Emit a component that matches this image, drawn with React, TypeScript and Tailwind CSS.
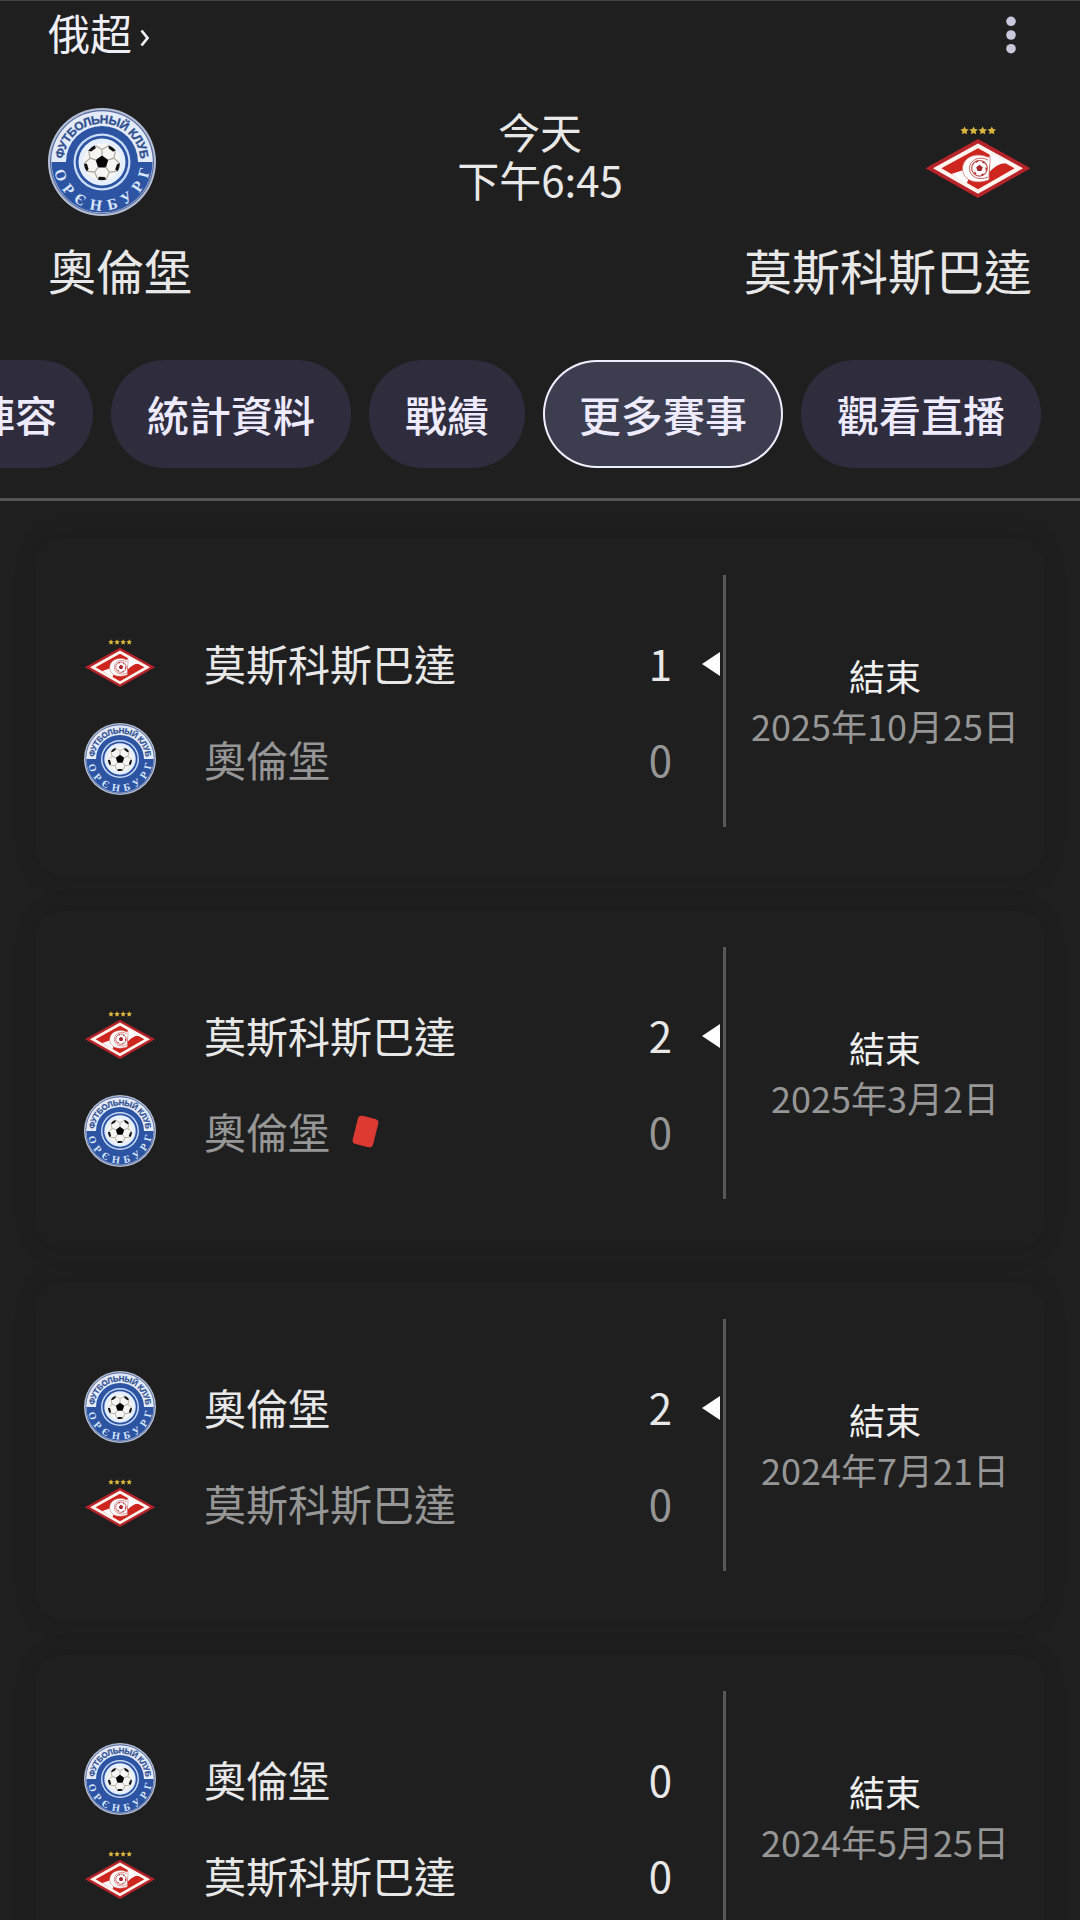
import React from "react";
import { clsx } from "clsx";

type TeamId = "orenburg" | "spartak";

interface Side {
  team: TeamId;
  score: number;
  redCard?: boolean;
}

interface Match {
  date: string;
  sides: [Side, Side];
}

const teamNames: Record<TeamId, string> = {
  orenburg: "奧倫堡",
  spartak: "莫斯科斯巴達",
};

const tabs = ["陣容", "統計資料", "戰績", "更多賽事", "觀看直播"];

const matches: Match[] = [
  {
    date: "2025年10月25日",
    sides: [
      { team: "spartak", score: 1 },
      { team: "orenburg", score: 0 },
    ],
  },
  {
    date: "2025年3月2日",
    sides: [
      { team: "spartak", score: 2 },
      { team: "orenburg", score: 0, redCard: true },
    ],
  },
  {
    date: "2024年7月21日",
    sides: [
      { team: "orenburg", score: 2 },
      { team: "spartak", score: 0 },
    ],
  },
  {
    date: "2024年5月25日",
    sides: [
      { team: "orenburg", score: 0 },
      { team: "spartak", score: 0 },
    ],
  },
];

function OrenburgLogo({ className, id }: { className?: string; id: string }) {
  return (
    <svg viewBox="0 0 108 108" className={className}>
      <defs>
        <path id={`${id}-top`} d="M15.5 54a38.5 38.5 0 0 1 77 0" />
        <path id={`${id}-bottom`} d="M5.5 54a48.5 48.5 0 0 0 97 0" />
      </defs>
      <circle cx="54" cy="54" r="54" fill="#b4bfd6" />
      <circle cx="54" cy="54" r="52" fill="#5a6c9c" />
      <circle cx="54" cy="54" r="50.8" fill="#e3eafa" />
      <path d="M3.5 54a50.5 50.5 0 0 0 101 0z" fill="#2c54a3" />
      <circle cx="54" cy="54" r="36" fill="#2c54a3" />
      <circle cx="54" cy="54" r="28.5" fill="#c9dcf8" />
      <circle cx="54" cy="54" r="26.3" fill="#2c54a3" />
      <circle cx="54" cy="54" r="23.5" fill="#e6effd" />
      <circle cx="54" cy="54" r="18.5" fill="#f7f5f1" />
      {/* Ball panels */}
      <path d="M54 47.5l6.3 4.6-2.4 7.4h-7.8l-2.4-7.4z" fill="#050505" />
      {[0, 72, 144, 216, 288].map((angle) => (
        <g key={angle} transform={`rotate(${angle} 54 54)`}>
          <path d="M54 48v-6.5M54 41.5l-6-3.5M54 41.5l6-3.5" stroke="#a9a49c" strokeWidth="1.1" fill="none" />
          <path d="M60.5 37.2q4.5 1.6 7.3 5l-2.6 1.6-4.5-3.4z" fill="#111" />
        </g>
      ))}
      <text fontFamily="Liberation Sans, sans-serif" fontWeight="700" fontSize="12" fill="#30508f" stroke="#30508f" strokeWidth="0.3">
        <textPath href={`#${id}-top`} startOffset="3" textLength="115">
          ФУТБОЛЬНЫЙ КЛУБ
        </textPath>
      </text>
      <text fontFamily="Liberation Serif, serif" fontWeight="700" fontSize="15.5" fill="#d9e6fb">
        <textPath href={`#${id}-bottom`} startOffset="9" textLength="136">
          ОРЄНБУРГ
        </textPath>
      </text>
    </svg>
  );
}

function SpartakLogo({ className }: { className?: string }) {
  return (
    <svg viewBox="0 0 108 108" className={className}>
      {[40.5, 49.6, 58.7, 67.8].map((x) => (
        <path
          key={x}
          transform={`translate(${x} 22.5)`}
          d="M0-4l1.3 2.4 2.9.5-2.1 2 .4 2.9L0 2.6l-2.5 1.2.4-2.9-2.1-2 2.9-.5z"
          fill="#d9b53c"
        />
      ))}
      <path d="M54 31l52.5 29.3L54 90 1.5 60.3z" fill="#b6242a" />
      <path d="M54 35.4l45 24.9-45 25.5-45-25.5z" fill="#fff4ee" />
      <path d="M54 40.2l36.6 20.1L54 81.2 17.4 60.3z" fill="#cf251f" />
      {/* Diagonal band */}
      <path d="M65 45l19 10.5c-7-1-12 2-18 8V48zM27.5 66l12-4c1.5 5 3.5 8 5 9.5l-2 4z" fill="#fff" />
      <path
        d="M66 54.500v-6.300l-2 1C51 43.500 38.500 50 38.500 60.800c0 11 12.500 16.500 26.500 11v-5.600z"
        fill="#fff"
        stroke="#c96f6c"
        strokeWidth="0.8"
      />
      <path d="M64 52c-8-4.500-18.500-.5-18.500 8.300s9.500 12.700 18.500 8.700" fill="none" stroke="#c9625f" strokeWidth="1" />
      <circle cx="55.5" cy="60.3" r="7.8" fill="#fff" stroke="#c04a4c" strokeWidth="1.2" />
      <path d="M55.500 56.800l3.300 2.400-1.300 3.800h-4l-1.300-3.800z" fill="#a7262b" />
      <path
        d="M52 54.200l2-1M58.500 53.600l2 1.600M62.200 59.500v3M59.500 66l-2 1M52 66l-1.500-1.800"
        stroke="#b2282c"
        strokeWidth="1.4"
        fill="none"
      />
    </svg>
  );
}

function TeamLogo({ team, id, className }: { team: TeamId; id: string; className?: string }) {
  return team === "orenburg" ? <OrenburgLogo id={id} className={className} /> : <SpartakLogo className={className} />;
}

function MatchCard({ match, index }: { match: Match; index: number }) {
  const [first, second] = match.sides;

  return (
    <div className="flex h-[336px] shrink-0 rounded-[24px] bg-[#1f1f1f] pt-9 pb-12 pl-12 shadow-[0_0_24px_rgba(0,0,0,0.12)]">
      <div className="flex flex-1 flex-col pt-[52px]">
        {match.sides.map((side, i) => {
          const other = i === 0 ? second : first;
          const lost = side.score < other.score;
          const won = side.score > other.score;
          return (
            <div
              key={side.team}
              className={clsx("flex h-[72px] items-center", i === 0 && "mb-6", lost ? "text-[#969696]" : "text-[#e8e8e8]")}
            >
              <TeamLogo team={side.team} id={`match-${index}`} className="size-[72px]" />
              <span className="ml-12">{teamNames[side.team]}</span>
              {side.redCard && <span className="ml-[25px] h-[29px] w-[21px] rotate-[14deg] rounded-[4px] bg-[#dd3a34]" />}
              <span className="ml-auto">{side.score}</span>
              <span className="mt-0.5 mr-[3px] ml-[30px] w-[18px]">
                {won && (
                  <svg viewBox="0 0 18 24" className="h-6 w-[18px]">
                    <path d="M18 0v24L0 12z" fill="#fff" />
                  </svg>
                )}
              </span>
            </div>
          );
        })}
      </div>
      <div className="flex w-[321px] flex-col items-center justify-center border-l-[3px] border-[#585858] pb-[3px] text-[36px] leading-[50px]">
        <div className="text-[#f0f0f0]">結束</div>
        <div className="text-[#969696]">{match.date}</div>
      </div>
    </div>
  );
}

export default function App() {
  return (
    <div
      lang="zh-TW"
      className="flex h-[1920px] w-[1080px] flex-col overflow-hidden border-t border-[#414343] bg-[#1f1f1f] font-['Noto_Sans_CJK_TC',sans-serif] text-[42px] leading-[48px] text-[#e8e8e8]"
    >
      <header className="flex h-[497px] shrink-0 flex-col">
        <div className="flex h-[106px] items-start justify-between pt-[7px] pr-16 pl-12">
          <div className="flex text-[#eeeef6]">
            <span>俄超</span>
            <svg viewBox="0 0 12 20" className="mt-5 ml-[7px] h-5 w-3" fill="none" stroke="currentColor" strokeWidth="2.8">
              <path d="M2.500 2.500l6 7.500-6 7.500" />
            </svg>
          </div>
          <svg viewBox="0 0 10 38" className="mt-2 h-[38px] w-2.5" fill="#c9c7dc">
            <circle cx="5" cy="5.3" r="4.8" />
            <circle cx="5" cy="19" r="4.8" />
            <circle cx="5" cy="32.7" r="4.8" />
          </svg>
        </div>

        <div className="flex items-start justify-between px-12">
          <OrenburgLogo id="header" className="mt-px size-[108px]" />
          <div className="text-center">
            <div>今天</div>
            <div>下午6:45</div>
          </div>
          <SpartakLogo className="mt-px size-[108px]" />
        </div>

        <div className="mt-[17px] flex justify-between px-12 text-[48px] leading-[72px]">
          <span>{teamNames.orenburg}</span>
          <span>{teamNames.spartak}</span>
        </div>

        <nav className="mt-auto mb-[30px] -ml-[63px] flex gap-[18px]">
          {tabs.map((tab) => (
            <button
              key={tab}
              className={clsx(
                "h-[108px] shrink-0 rounded-full px-9 pb-px font-medium text-[#eeebff]",
                tab === "更多賽事" ? "bg-[#3c3e50] ring-2 ring-inset ring-[#f0eefc]" : "bg-[#2f2d3d]"
              )}
            >
              {tab}
            </button>
          ))}
        </nav>
      </header>

      <main className="flex flex-1 flex-col gap-9 overflow-hidden border-t-[3px] border-[#545454] px-9 pt-[38px]">
        {matches.map((match, i) => (
          <MatchCard key={match.date} match={match} index={i} />
        ))}
      </main>
    </div>
  );
}
